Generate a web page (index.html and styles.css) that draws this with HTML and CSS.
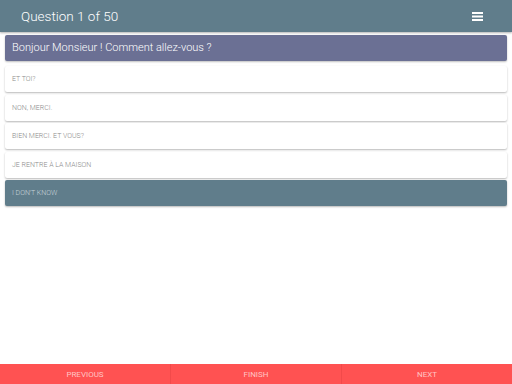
FILE: index.html
```html
<!DOCTYPE html>
<html lang="fr">
<head>
  <meta charset="UTF-8">
  <meta name="viewport" content="width=device-width, initial-scale=1.0">
  <title>Quiz</title>
  <link rel="stylesheet" href="styles.css">
</head>
<body>

  <header class="topbar">
    <span class="title">Question 1 of 50</span>
    <svg class="menu" width="11" height="9" viewBox="0 0 11 9">
      <rect x="0" y="0" width="11" height="2" fill="#fff"/>
      <rect x="0" y="3.5" width="11" height="2" fill="#fff"/>
      <rect x="0" y="7" width="11" height="2" fill="#fff"/>
    </svg>
  </header>

  <main class="content">
    <div class="question">Bonjour Monsieur ! Comment allez-vous ?</div>
    <ul class="answers">
      <li class="answer">Et toi?</li>
      <li class="answer">Non, merci.</li>
      <li class="answer">Bien merci. Et vous?</li>
      <li class="answer">Je rentre à la maison</li>
      <li class="answer selected">I don't know</li>
    </ul>
  </main>

  <footer class="bottombar">
    <button>Previous</button>
    <button>Finish</button>
    <button>Next</button>
  </footer>

</body>
</html>
```

FILE: styles.css
```css
html, body {
  height: 100%;
}

body {
  margin: 0;
  font-family: Roboto, "Liberation Sans", sans-serif;
  background: #fff;
  display: flex;
  flex-direction: column;
}

.topbar {
  height: 32px;
  flex: none;
  background: #607d8b;
  box-shadow: 0 1px 2px rgba(0, 0, 0, 0.3);
  display: flex;
  align-items: center;
  justify-content: space-between;
  padding: 0 29px 0 21px;
}

.title {
  color: #fff;
  font-size: 13.5px;
  font-weight: 300;
}

.menu {
  display: block;
}

.content {
  flex: 1;
  padding: 3px 5px 0;
}

.question {
  height: 26px;
  line-height: 25px;
  background: #6b7094;
  color: #fff;
  font-size: 11px;
  font-weight: 300;
  padding: 0 7px;
  border-radius: 2px;
  box-shadow: 0 1px 2px rgba(0, 0, 0, 0.25);
}

.answers {
  list-style: none;
  margin: 5px 0 0;
  padding: 0;
  display: flex;
  flex-direction: column;
  gap: 2.5px;
}

.answer {
  height: 26px;
  line-height: 26px;
  background: #fff;
  color: #8a8a8a;
  font-size: 7px;
  font-weight: 300;
  text-transform: uppercase;
  padding: 0 7px;
  border-radius: 2px;
  box-shadow: 0 1px 2px rgba(0, 0, 0, 0.28);
}

.answer.selected {
  background: #607d8b;
  color: #c9d4da;
}

.bottombar {
  height: 20px;
  flex: none;
  display: flex;
  background: #ff5252;
}

.bottombar button {
  flex: 1;
  border: none;
  background: none;
  border-left: 1px solid #f24a4a;
  color: #ffc4c4;
  font-family: Roboto, "Liberation Sans", sans-serif;
  font-size: 8px;
  text-transform: uppercase;
  padding: 0;
}

.bottombar button:first-child {
  border-left: none;
}
```
